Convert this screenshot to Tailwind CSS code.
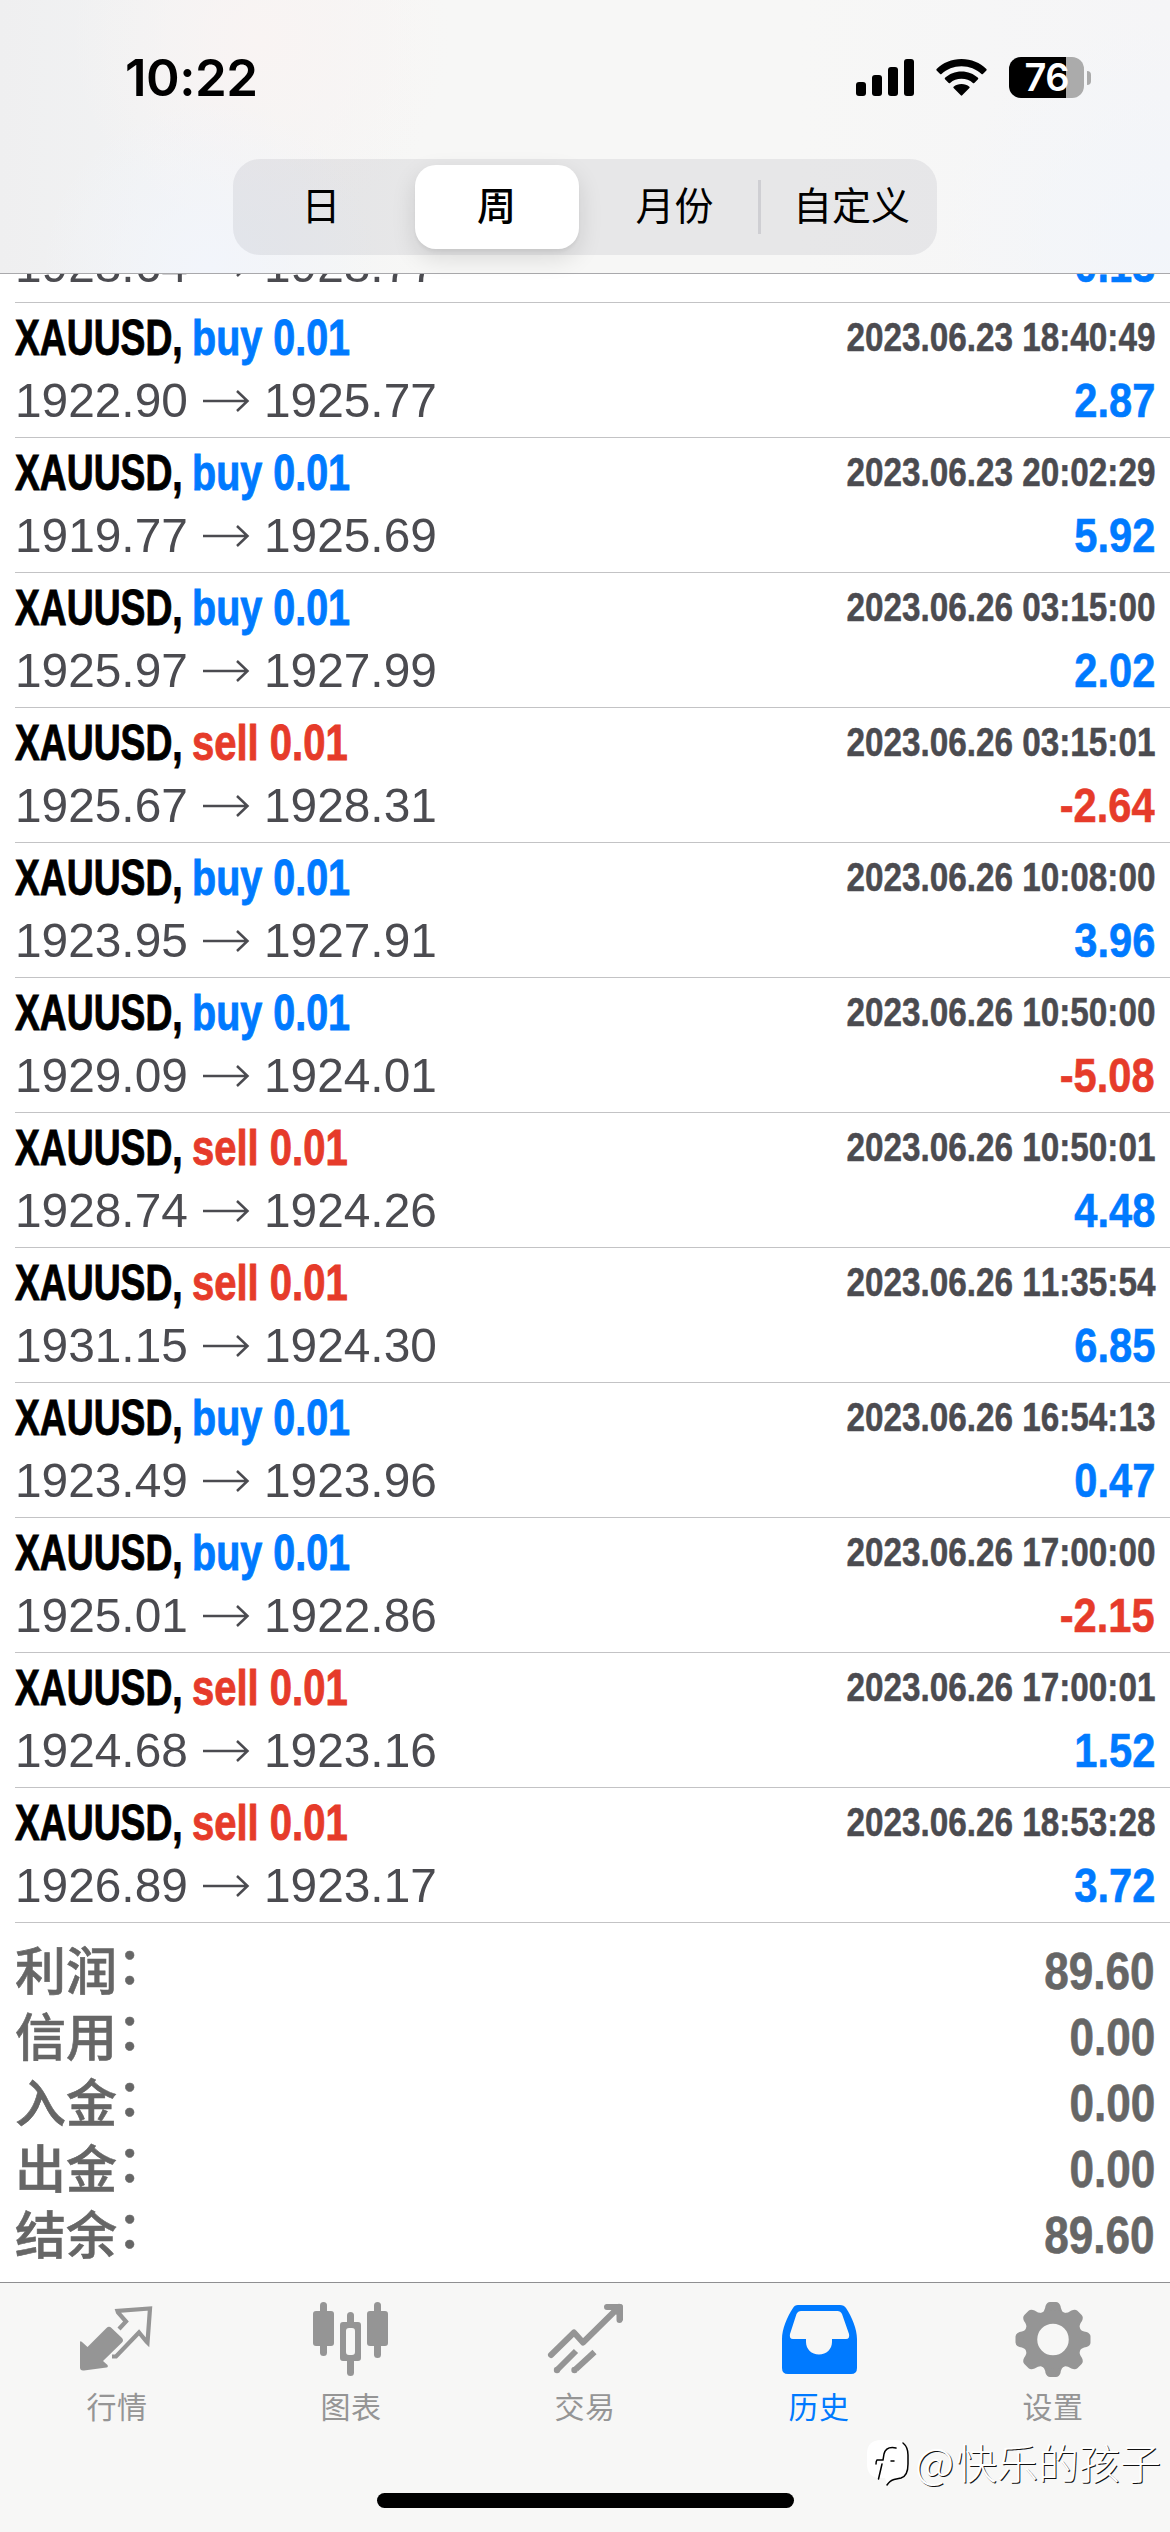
<!DOCTYPE html>
<html lang="zh-CN">
<head>
<meta charset="utf-8">
<title>历史</title>
<script src="https://cdn.jsdelivr.net/npm/@tailwindcss/browser@4"></script>
</head>
<body class="bg-white">
<div class="flex h-[2532px] w-[1170px] flex-col overflow-hidden bg-white font-['Liberation_Sans','Noto_Sans_CJK_SC',sans-serif] [font-kerning:none]">
  <header class="relative z-10 flex h-[274px] shrink-0 flex-col border-b border-[#a9a9ac] bg-[radial-gradient(circle_at_210px_270px,#f2f5fb_0,transparent_170px),radial-gradient(circle_at_1160px_240px,#f2f5fa_0,transparent_220px),radial-gradient(circle_at_260px_40px,#f9f4f3_0,transparent_190px),linear-gradient(90deg,#efeff0_0,#f1f2f3_140px,#f7f7f6_420px,#f7f7f6_800px,#f5f5f7_1170px)]">
    <div class="flex h-[159px] items-start justify-between pt-[57px] pr-[79px] pl-[125px]">
      <div class="font-['Inter',sans-serif] text-[51px] leading-[41px] font-semibold tracking-[-0.5px]">10:22</div>
      <div class="flex items-start">
        <svg class="mt-[2px] mr-[22px] h-[37px] w-[58px]" viewBox="0 0 58 37"><rect y="23" width="10" height="14" rx="3"/><rect x="16" y="16" width="10" height="21" rx="3"/><rect x="32" y="8" width="10" height="29" rx="3"/><rect x="48" width="10" height="37" rx="3"/></svg>
        <svg class="mt-[2px] mr-[22px] h-[37px] w-[51px]" viewBox="0 0 51 37"><path d="M25.500 0C35.500 0 44 3.800 50.400 10Q51 10.700 50.400 11.400L46.900 15Q46.200 15.600 45.500 15C40.200 10.200 33.300 7.300 25.500 7.300S10.800 10.200 5.500 15Q4.800 15.600 4.100 15L.6 11.400Q0 10.700 .6 10C7 3.800 15.500 0 25.500 0Z"/><path d="M25.500 12.500C32 12.500 37.600 14.900 42 18.800Q42.600 19.500 42 20.200L38.300 23.900Q37.600 24.500 36.900 23.900C33.700 21.300 29.900 19.800 25.500 19.800S17.300 21.300 14.100 23.900Q13.400 24.500 12.700 23.900L9 20.200Q8.400 19.500 9 18.800C13.400 14.900 19 12.500 25.500 12.500Z"/><path d="M25.500 25C28.600 25 31.300 26 33.400 27.700Q34 28.400 33.400 29.100L26.200 36.300Q25.500 37 24.800 36.300L17.600 29.100Q17 28.400 17.600 27.700C19.700 26 22.400 25 25.500 25Z"/></svg>
        <div class="flex h-[41px] items-center gap-[3px]">
          <div class="flex h-[41px] w-[75px] items-center justify-center rounded-[12px] bg-[linear-gradient(90deg,#000_57px,#ababab_57px)] font-['Inter',sans-serif] text-[38px] leading-[41px] font-semibold tracking-[-1px] text-white">76</div>
          <div class="h-[14px] w-[4px] rounded-r-full bg-[#ababab]"></div>
        </div>
      </div>
    </div>
    <nav class="mx-auto grid h-[96px] w-[704px] grid-cols-4 items-center rounded-[27px] bg-[#767680]/12 text-center text-[39px] leading-[54px]">
      <div>日</div>
      <div class="mx-[6px] flex h-[84px] items-center justify-center rounded-[21px] bg-white pr-[1px] font-medium shadow-[0_9px_24px_rgba(0,0,0,0.12),0_3px_3px_rgba(0,0,0,0.04)]">周</div>
      <div class="flex h-[54px] items-center justify-center border-r-[3px] border-[#cfcfd3] pl-[6px]">月份</div>
      <div class="pl-[5px]">自定义</div>
    </nav>
  </header>
  <main class="relative flex grow flex-col">
    <div id="deals" class="-mt-[106px] flex flex-col"></div>
    <div id="totals" class="flex flex-col pt-[15px] pr-[15px] pl-[15px]"></div>
  </main>
  <footer class="relative flex h-[250px] shrink-0 flex-col border-t border-[#8f8f91] bg-[#f7f7f6]">
    <div class="grid grid-cols-5 text-center text-[30px] leading-[46px] tracking-[0.6px] text-[#959595]">
      <div class="flex flex-col items-center"><svg class="h-[102px] w-[234px]" viewBox="0 0 234 102"><path fill="#959595" d="M80 59.500Q80 57.500 82 59L87.500 64L106.500 45Q109 42.500 111.500 45L122 55Q124 57.500 122 59.500L103 78L107.500 82Q108.500 84 106.500 84.500L84 87.500Q80 88 80 84.500Z"/><path fill="none" stroke="#959595" stroke-width="4.200" stroke-linejoin="miter" d="M119 46L126 38.500L118 29.500L117.500 28L150 25.500L147.500 59.500L146.500 58.500L139 49.500L116 73.500H112"/></svg>行情</div>
      <div class="flex flex-col items-center"><svg class="h-[102px] w-[234px]" viewBox="0 0 234 102" fill="#959595"><rect x="86" y="19" width="7" height="54" rx="3.500"/><rect x="79" y="28" width="21" height="35" rx="3"/><rect x="140" y="19" width="7" height="56" rx="3.500"/><rect x="133" y="28" width="21" height="35" rx="3"/><rect x="113" y="29" width="7" height="14" rx="3.500"/><rect x="113" y="74" width="7" height="19" rx="3.500"/><path fill-rule="evenodd" d="M109 39h15q3 0 3 3v33q0 3-3 3h-15q-3 0-3-3V42q0-3 3-3zM115 45q-3 0-3 3v21q0 3 3 3h3q3 0 3-3V48q0-3-3-3z"/></svg>图表</div>
      <div class="flex flex-col items-center"><svg class="h-[102px] w-[234px]" viewBox="0 0 234 102" fill="none" stroke="#959595" stroke-width="6" stroke-linejoin="round"><path stroke-linecap="round" d="M83 72L106 49.500L115 59.500L151 24M139 24H151.500V37"/><path d="M108 68L90 86M126.500 69L108 86"/><g fill="#959595" stroke="none"><circle cx="89" cy="87" r="3.200"/><circle cx="106.500" cy="87" r="3.200"/><path d="M138 21h14.500q2.500 0 2.500 2.500V38l-6-6-6-5z"/></g></svg>交易</div>
      <div class="flex flex-col items-center text-[#007aff]"><svg class="h-[102px] w-[234px]" viewBox="0 0 234 102"><path fill="#007aff" fill-rule="evenodd" d="M94 22H138Q142 22 144 25C150 34 155 46 155 56V85Q155 91 149 91H86Q80 91 80 85V56C80 46 85 34 91 25Q92.500 22 96 22ZM99 28Q96 28 94.500 31L88 51Q87 56 91 56H104V59C104 66 109.500 71.500 117 71.500S130 66 130 59V56H144Q148 56 147 51L140 31Q138.500 28 135.500 28Z"/></svg>历史</div>
      <div class="flex flex-col items-center"><svg class="h-[102px] w-[234px]" viewBox="0 0 234 102"><g id="gear" fill="#959595"></g><circle cx="117" cy="56.500" r="22.500" fill="none" stroke="#959595" stroke-width="13.500"/></svg>设置</div>
    </div>
    <div class="absolute bottom-[24px] left-[377px] h-[15px] w-[417px] rounded-full bg-black"></div>
    <div class="absolute right-[9px] bottom-[41px] flex items-center gap-[4px]">
      <svg class="mt-[3px] h-[48px] w-[44px]" viewBox="0 0 44 48"><path fill="#fff" d="M14 1H28Q40 1 40 14V26Q40 38 28 39L20 45L18 39H14Q0 39 0 25V15Q0 1 14 1Z"/><path fill="none" stroke="#000" stroke-width="1.500" stroke-linecap="round" d="M29 9Q19 7 17 15L16 21H10Q9 22 9 25M15 25L11.500 40M24 22H27M36 4Q41 8 41 16V25Q41 37 34 39L27 40.500Q23 41.500 20 46"/></svg>
      <div class="flex items-center font-['Noto_Sans_CJK_SC',sans-serif] leading-[60px] font-light text-white [text-shadow:1px_1px_0_#111]"><span class="-mt-[2px] w-[41px] text-[43px]">@</span><span class="text-[41px]">快乐的孩子</span></div>
    </div>
  </footer>
</div>
<script>
const deals = [
  ['buy', '1928.64', '1928.77', '2023.06.23 18:00:00', '0.13'],
  ['buy', '1922.90', '1925.77', '2023.06.23 18:40:49', '2.87'],
  ['buy', '1919.77', '1925.69', '2023.06.23 20:02:29', '5.92'],
  ['buy', '1925.97', '1927.99', '2023.06.26 03:15:00', '2.02'],
  ['sell', '1925.67', '1928.31', '2023.06.26 03:15:01', '-2.64'],
  ['buy', '1923.95', '1927.91', '2023.06.26 10:08:00', '3.96'],
  ['buy', '1929.09', '1924.01', '2023.06.26 10:50:00', '-5.08'],
  ['sell', '1928.74', '1924.26', '2023.06.26 10:50:01', '4.48'],
  ['sell', '1931.15', '1924.30', '2023.06.26 11:35:54', '6.85'],
  ['buy', '1923.49', '1923.96', '2023.06.26 16:54:13', '0.47'],
  ['buy', '1925.01', '1922.86', '2023.06.26 17:00:00', '-2.15'],
  ['sell', '1924.68', '1923.16', '2023.06.26 17:00:01', '1.52'],
  ['sell', '1926.89', '1923.17', '2023.06.26 18:53:28', '3.72'],
];
document.getElementById('deals').innerHTML = deals.map(([side, open, close, time, profit]) => `
  <div class="ml-[15px] flex h-[135px] flex-col border-b border-[#c3c3c5] pr-[15px] pt-[4px]">
    <div class="flex h-[62px] items-center justify-between font-bold whitespace-nowrap">
      <div class="flex items-center text-[50px] [-webkit-text-stroke:0.9px]">
        <span class="w-[177px] origin-left scale-x-[0.745]">XAUUSD,</span>
        <span class="origin-left ${side === 'buy' ? 'scale-x-[0.79] text-[#007aff]' : 'scale-x-[0.8] text-[#e63b2a]'}">${side} 0.01</span>
      </div>
      <span class="origin-right scale-x-[0.832] pb-[3px] text-[40px] text-[#4b4b50] [-webkit-text-stroke:0.5px]">${time}</span>
    </div>
    <div class="flex h-[63px] items-center justify-between text-[49px] whitespace-nowrap">
      <div class="flex items-center text-[48.3px] text-[#4b4b50]">
        <span class="w-[174px] origin-left scale-x-[0.99]">${open}</span>
        <svg class="mr-[11px] ml-[14px] h-[24px] w-[50px]" viewBox="0 0 50 24" fill="none" stroke="#4b4b50" stroke-width="2.500"><path d="M0 12H44M34 2L44.500 12L34 22"/></svg>
        <span class="origin-left scale-x-[0.99]">${close}</span>
      </div>
      <span class="origin-right scale-x-[0.85] font-bold [-webkit-text-stroke:0.6px] ${profit[0] === '-' ? 'text-[#e63b2a]' : 'text-[#007aff]'}">${profit}</span>
    </div>
  </div>`).join('');
document.getElementById('totals').innerHTML = [['利润', '89.60'], ['信用', '0.00'], ['入金', '0.00'], ['出金', '0.00'], ['结余', '89.60']].map(([k, v]) => `
  <div class="flex h-[66px] items-center justify-between text-[51px] leading-[60px] text-[#666]">
    <div class="flex pb-[7px] font-['Noto_Sans_CJK_SC',sans-serif] font-medium [-webkit-text-stroke:0.6px]"><span>${k}</span><span class="-mt-[6px]">：</span></div>
    <span class="origin-right scale-x-[0.865] pt-[1px] font-bold [-webkit-text-stroke:0.6px]">${v}</span>
  </div>`).join('');
document.getElementById('gear').innerHTML = [0, 45, 90, 135, 180, 225, 270, 315].map(a =>
  `<path transform="rotate(${a} 117 56.5)" d="M105 31Q109 28 109.500 23Q111 19 114 19H120Q123 19 124.500 23Q125 28 129 31L127 40H107Z"/>`).join('');
</script>
</body>
</html>
